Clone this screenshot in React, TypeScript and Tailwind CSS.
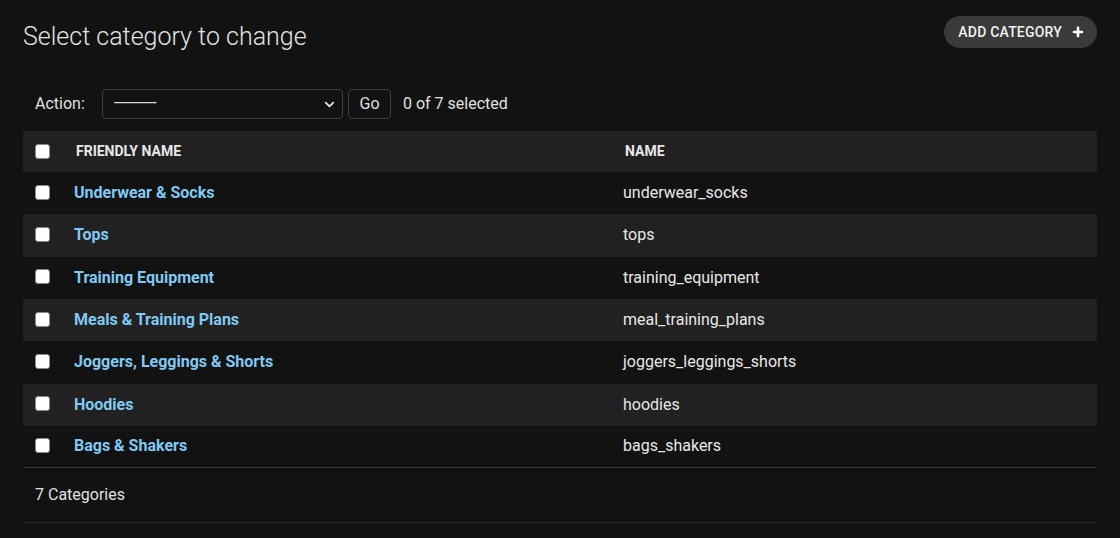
import { ChevronDown, Plus } from "lucide-react";

const categories = [
  { friendly: "Underwear & Socks", name: "underwear_socks" },
  { friendly: "Tops", name: "tops" },
  { friendly: "Training Equipment", name: "training_equipment" },
  { friendly: "Meals & Training Plans", name: "meal_training_plans" },
  { friendly: "Joggers, Leggings & Shorts", name: "joggers_leggings_shorts" },
  { friendly: "Hoodies", name: "hoodies" },
  { friendly: "Bags & Shakers", name: "bags_shakers" },
];

function Checkbox() {
  return <span className="block w-[15px] h-[15px] rounded-[3px] bg-white border border-[#8a8a8a]"></span>;
}

export default function App() {
  return (
    <div className="min-h-screen bg-[#121212] px-[23px] text-[#e0e0e0] font-['Roboto',sans-serif]">
      {/* Header */}
      <div className="flex justify-between items-start pt-4">
        <h1 className="mt-[5px] text-[25px] leading-[31px] font-light text-[#e3e3e3]">Select category to change</h1>
        <button className="h-8 pl-[14px] pr-[12px] rounded-full bg-[#3a3a3a] flex items-center gap-[9px] text-[14px] font-medium tracking-[0.2px] text-[#f2f2f2]">
          ADD CATEGORY
          <Plus size={14} strokeWidth={4.5} className="text-white" />
        </button>
      </div>

      {/* Actions */}
      <div className="mt-[37px] flex items-center pl-3 h-[30px] text-[16px]">
        <span className="w-[67px]">Action:</span>
        <div className="w-[241px] h-[30px] border border-[#3d3d3d] rounded-[4px] flex items-center justify-between pl-[11px] pr-[5px]">
          <span className="text-[16px] tracking-[-0.6px] -mt-[2px]">-----------</span>
          <ChevronDown size={15} strokeWidth={3} />
        </div>
        <button className="ml-[5px] h-[30px] w-[43px] border border-[#3d3d3d] rounded-[4px] text-[16px]">Go</button>
        <span className="ml-[12px]">0 of 7 selected</span>
      </div>

      {/* Table */}
      <div className="mt-3">
        <div className="flex items-center h-[41px] bg-[#212121] text-[14px] font-bold text-[#e8e8e8]">
          <div className="w-[53px] pl-3 -mt-[1px]"><Checkbox /></div>
          <div className="w-[549px]">FRIENDLY NAME</div>
          <div>NAME</div>
        </div>
        {categories.map((c, i) => (
          <div
            key={c.name}
            className={`flex items-center text-[16px] ${i % 2 === 0 ? "bg-[#121212]" : "bg-[#212121]"} ${i === categories.length - 1 ? "h-[42px] border-b border-[#353535]" : "h-[42.33px]"}`}
          >
            <div className="w-[51px] pl-3 -mt-[2px]"><Checkbox /></div>
            <div className="w-[549px] font-bold text-[#81c9f2]">{c.friendly}</div>
            <div className="text-[#e8e8e8]">{c.name}</div>
          </div>
        ))}
        <div className="h-[55px] flex items-center pl-3 text-[16px] border-b border-[#2a2a2a]">7 Categories</div>
      </div>
    </div>
  );
}
